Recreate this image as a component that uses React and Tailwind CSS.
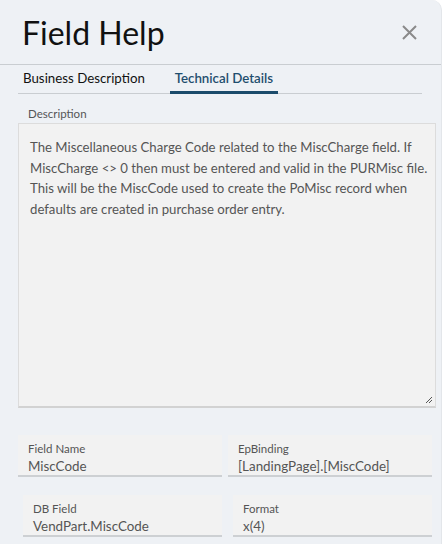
const lines = [
    "The Miscellaneous Charge Code related to the MiscCharge field. If",
    "MiscCharge <> 0 then must be entered and valid in the PURMisc file.",
    "This will be the MiscCode used to create the PoMisc record when",
    "defaults are created in purchase order entry.",
];

const Field = ({ label, value, className = "" }) => (
    <div className={`bg-[#f2f2f2] border-b-2 border-[#cdd0d3] h-[42px] pl-[10px] pt-[7px] ${className}`}>
        <div className="text-[11.5px] leading-[14px] text-[#555]">{label}</div>
        <div className="text-[13.4px] leading-[18px] text-[#555] mt-[1px] whitespace-nowrap">{value}</div>
    </div>
);

const App = () => {
    return (
        <div className="w-[445px] h-[544px] bg-white overflow-hidden font-['Lato',sans-serif]">
            <div className="w-[442px] h-full bg-[#eef1f5] rounded-tr-[10px] border-r border-[#e3e6ea]">
                {/* Header */}
                <div className="h-[65px] flex items-center justify-between pl-[22px] pr-[24px] border-b border-[#c9cdd1]">
                    <h1 className="text-[32px] leading-none text-[#111] pt-[2px]">Field Help</h1>
                    <button className="w-[16px] h-[16px] flex items-center justify-center">
                        <svg width="15" height="15" viewBox="0 0 15 15">
                            <path d="M1 1 L14 14 M14 1 L1 14" stroke="#8a8a8a" strokeWidth="2" />
                        </svg>
                    </button>
                </div>

                {/* Tabs */}
                <div className="mx-[18px] w-[404px] h-[29px] flex border-b border-[#c9cdd1]">
                    <div className="px-[5px] flex items-center text-[13.3px] text-[#111]">Business Description</div>
                    <div className="relative ml-[20px] w-[108px] flex items-center justify-center text-[13.3px] font-semibold text-[#1f4e6e]">
                        Technical Details
                        <span className="absolute left-0 right-0 bottom-[-1px] h-[3px] bg-[#1b4b6b]"></span>
                    </div>
                </div>

                {/* Description */}
                <div className="px-[18px] pt-[13px]">
                    <div className="pl-[10px] text-[11.5px] leading-[14px] text-[#555]">Description</div>
                    <div className="relative mt-[2px] w-[418px] h-[285px] bg-[#f2f2f2] border border-[#dcdcdc] border-b-2 border-b-[#d2d2d2] pl-[11px] pt-[13px]">
                        {lines.map((line, i) => (
                            <div key={i} className="text-[13.2px] leading-[20.7px] text-[#555] whitespace-nowrap">
                                {line}
                            </div>
                        ))}
                        <svg className="absolute right-[2px] bottom-[2px]" width="8" height="8" viewBox="0 0 8 8">
                            <path d="M7 1 L1 7 M7 4 L4 7" stroke="#555" strokeWidth="1" />
                        </svg>
                    </div>
                </div>

                {/* Fields */}
                <div className="pt-[27px] flex flex-col gap-[18px]">
                    <div className="flex gap-[6px] pl-[18px]">
                        <Field label="Field Name" value="MiscCode" className="w-[204px]" />
                        <Field label="EpBinding" value="[LandingPage].[MiscCode]" className="w-[204px]" />
                    </div>
                    <div className="flex gap-[11px] pl-[23px]">
                        <Field label="DB Field" value="VendPart.MiscCode" className="w-[199px]" />
                        <Field label="Format" value="x(4)" className="w-[199px]" />
                    </div>
                </div>
            </div>
        </div>
    );
};

export default App;
